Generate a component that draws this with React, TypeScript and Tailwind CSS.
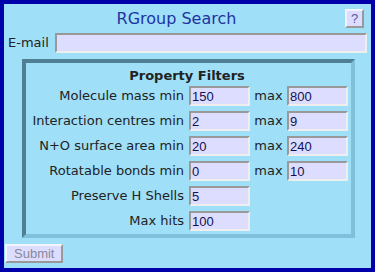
import React from "react";

const rows: { label: string; min: string; max?: string }[] = [
  { label: "Molecule mass min", min: "150", max: "800" },
  { label: "Interaction centres min", min: "2", max: "9" },
  { label: "N+O surface area min", min: "20", max: "240" },
  { label: "Rotatable bonds min", min: "0", max: "10" },
  { label: "Preserve H Shells", min: "5" },
  { label: "Max hits", min: "100" },
];

const inputCls =
  "h-[20px] w-[61px] bg-[#ddddff] border-2 border-t-[#999999] border-l-[#999999] border-b-[#eeeeee] border-r-[#eeeeee] px-[1px] text-[13px] leading-[16px] text-[#111155] outline-none font-['Liberation_Sans',Arial,sans-serif]";

export default function App() {
  return (
    <div className="w-[375px] h-[272px] border-4 border-[#0000aa] bg-[#9fdff8] flex flex-col font-['DejaVu_Sans',Verdana,sans-serif] text-[13px] text-[#222]">
      {/* title */}
      <div className="h-[29px] flex items-center">
        <div className="flex-1 text-center pl-[4px] text-[16px] text-[#2233a0]">RGroup Search</div>
        <button className="w-[19px] h-[19px] mr-[7px] bg-[#ddddff] border-2 border-t-[#f4f4ff] border-l-[#f4f4ff] border-b-[#999999] border-r-[#999999] text-[13px] leading-[13px] text-[#5a5a9a] font-['Liberation_Sans',Arial,sans-serif] flex items-center justify-center">
          ?
        </button>
      </div>

      {/* email */}
      <div className="h-[20px] flex items-center pl-[4px] pr-[4px] gap-[6px]">
        <span>E-mail</span>
        <input className={inputCls + " flex-1 w-auto"} defaultValue="" />
      </div>

      {/* property filters */}
      <div className="mt-[6px] ml-[18px] mr-[16px] border-4 border-t-[#4f7f92] border-l-[#4f7f92] border-b-[#80c0da] border-r-[#80c0da] pt-[3px] pb-[3px] pr-[3px]">
        <div className="h-[20px] leading-[20px] text-center font-bold">Property Filters</div>
        <div className="grid grid-cols-[1fr_61px_37px_61px] gap-y-[5px] items-center">
          {rows.map((r) => (
            <React.Fragment key={r.label}>
              <div className="text-right pr-[5px] leading-[20px] whitespace-nowrap">{r.label}</div>
              <input className={inputCls} defaultValue={r.min} />
              {r.max !== undefined ? (
                <>
                  <div className="text-center">max</div>
                  <input className={inputCls} defaultValue={r.max} />
                </>
              ) : (
                <>
                  <div />
                  <div />
                </>
              )}
            </React.Fragment>
          ))}
        </div>
      </div>

      {/* submit */}
      <div className="mt-[6px] pl-[1px]">
        <button
          disabled
          className="h-[19px] px-[7px] bg-[#ddddff] border-2 border-t-[#f4f4ff] border-l-[#f4f4ff] border-b-[#999999] border-r-[#999999] text-[13px] leading-[13px] text-[#888899] font-['Liberation_Sans',Arial,sans-serif]"
        >
          Submit
        </button>
      </div>
    </div>
  );
}
